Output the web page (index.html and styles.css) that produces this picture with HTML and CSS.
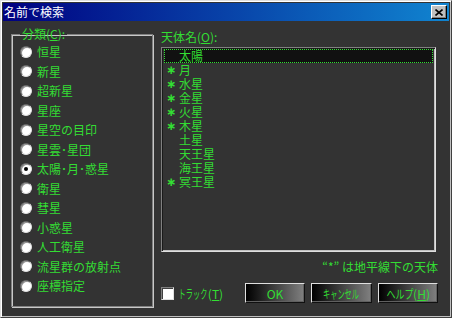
FILE: index.html
```html
<!DOCTYPE html>
<html lang="ja">
<head>
    <meta charset="UTF-8">
    <title>名前で検索</title>
    <link rel="stylesheet" href="styles.css">
</head>
<body>

    <div class="window">
        <div class="titlebar">
            <span class="title">名前で検索</span>
            <button class="close-btn">
                <svg width="8" height="7" viewBox="0 0 8 7">
                    <path d="M0.5 0.5 L7.5 6.5 M7.5 0.5 L0.5 6.5" stroke="#000" stroke-width="1.6" fill="none"/>
                </svg>
            </button>
        </div>

        <div class="main">
            <fieldset class="group">
                <legend>分類(<u>C</u>):</legend>
                <div class="radio-row"><span class="radio"></span>恒星</div>
                <div class="radio-row"><span class="radio"></span>新星</div>
                <div class="radio-row"><span class="radio"></span>超新星</div>
                <div class="radio-row"><span class="radio"></span>星座</div>
                <div class="radio-row"><span class="radio"></span>星空の目印</div>
                <div class="radio-row"><span class="radio"></span>星雲･星団</div>
                <div class="radio-row"><span class="radio checked"></span>太陽･月･惑星</div>
                <div class="radio-row"><span class="radio"></span>衛星</div>
                <div class="radio-row"><span class="radio"></span>彗星</div>
                <div class="radio-row"><span class="radio"></span>小惑星</div>
                <div class="radio-row"><span class="radio"></span>人工衛星</div>
                <div class="radio-row"><span class="radio"></span>流星群の放射点</div>
                <div class="radio-row"><span class="radio"></span>座標指定</div>
            </fieldset>

            <div class="right">
                <div class="list-label">天体名(<u>O</u>):</div>
                <div class="listbox">
                    <div class="item selected"><span class="mark"></span>太陽</div>
                    <div class="item"><span class="mark">∗</span>月</div>
                    <div class="item"><span class="mark">∗</span>水星</div>
                    <div class="item"><span class="mark">∗</span>金星</div>
                    <div class="item"><span class="mark">∗</span>火星</div>
                    <div class="item"><span class="mark">∗</span>木星</div>
                    <div class="item"><span class="mark"></span>土星</div>
                    <div class="item"><span class="mark"></span>天王星</div>
                    <div class="item"><span class="mark"></span>海王星</div>
                    <div class="item"><span class="mark">∗</span>冥王星</div>
                </div>
                <div class="note">“*” は地平線下の天体</div>
                <div class="bottom-row">
                    <label class="check"><span class="checkbox"></span><span class="squeeze sq-track">トラック</span>(<u>T</u>)</label>
                    <div class="buttons">
                        <button class="btn">OK</button>
                        <button class="btn"><span class="squeeze sq-cancel">キャンセル</span></button>
                        <button class="btn"><span class="squeeze sq-help">ヘルプ</span>(<u>H</u>)</button>
                    </div>
                </div>
            </div>
        </div>
    </div>

</body>
</html>
```

FILE: styles.css
```css
body {
    margin: 0;
    background: #333333;
    font-family: "Noto Sans CJK JP", "DejaVu Sans", sans-serif;
    font-size: 12px;
}
.window {
    width: 452px;
    height: 318px;
    box-sizing: border-box;
    background: #333333;
    border-top: 1px solid #dfdfdf;
    border-left: 1px solid #dfdfdf;
    border-right: 1px solid #404040;
    border-bottom: 1px solid #404040;
    box-shadow: inset 1px 1px 0 #ffffff, inset -1px -1px 0 #c0c0c0;
    padding: 2px;
    color: #33dd33;
}
.titlebar {
    height: 18px;
    background: linear-gradient(to right, #000080, #1084d0);
    display: flex;
    align-items: center;
    justify-content: space-between;
    padding: 0 2px 0 1px;
}
.title {
    color: white;
    font-size: 12px;
    line-height: 14px;
}
.close-btn {
    width: 16px;
    height: 14px;
    padding: 0;
    background: #c0c0c0;
    border-top: 1px solid #ffffff;
    border-left: 1px solid #ffffff;
    border-right: 1px solid #000000;
    border-bottom: 1px solid #000000;
    box-shadow: inset -1px -1px 0 #808080;
    display: flex;
    align-items: center;
    justify-content: center;
}
.main {
    display: flex;
    padding-left: 8px;
}
.group {
    margin: 6px 0 0 0;
    padding: 0 0 0 8px;
    width: 142px;
    height: 280px;
    box-sizing: border-box;
    border: 1px solid #808080;
    box-shadow: inset 1px 1px 0 #c8c8c8, 1px 1px 0 #c8c8c8;
}
.group legend {
    padding: 0 2px;
    line-height: 14px;
    color: #33dd33;
}
.radio-row {
    height: 19.5px;
    display: flex;
    align-items: center;
    white-space: nowrap;
}
.radio-row:first-of-type {
    margin-top: 1px;
}
.radio {
    width: 12px;
    height: 12px;
    box-sizing: border-box;
    border-radius: 50%;
    background: white;
    border: 1px solid;
    border-color: #606060 #e0e0e0 #e0e0e0 #606060;
    box-shadow: inset 1px 1px 0 #909090;
    margin-right: 5px;
    position: relative;
    flex-shrink: 0;
}
.radio.checked::after {
    content: "";
    position: absolute;
    left: 3px;
    top: 3px;
    width: 4px;
    height: 4px;
    border-radius: 50%;
    background: black;
}
.right {
    margin-left: 8px;
    padding-top: 9px;
    width: 277px;
}
.list-label {
    line-height: 14px;
}
.listbox {
    margin-top: 3px;
    width: 275px;
    height: 205px;
    box-sizing: border-box;
    border: 1px solid;
    border-color: #808080 #dfdfdf #dfdfdf #808080;
    box-shadow: inset 1px 1px 0 #1a1a1a, inset -1px -1px 0 #c0c0c0;
    padding: 1px 2px;
}
.item {
    height: 14px;
    line-height: 14px;
    display: flex;
    align-items: center;
    padding-left: 2px;
    box-sizing: border-box;
    white-space: nowrap;
}
.item.selected {
    background: #111111;
    border: 1px dotted #33dd33;
    padding-left: 1px;
}
.mark {
    width: 13px;
    flex-shrink: 0;
    font-family: "DejaVu Sans", sans-serif;
    font-size: 12px;
    font-weight: bold;
}
.note {
    margin-top: 8px;
    line-height: 14px;
    text-align: right;
}
.bottom-row {
    margin-top: 9px;
    display: flex;
    justify-content: space-between;
    align-items: center;
}
.check {
    display: flex;
    align-items: center;
    white-space: nowrap;
}
.checkbox {
    width: 13px;
    height: 13px;
    box-sizing: border-box;
    background: white;
    border: 1px solid;
    border-color: #808080 #dfdfdf #dfdfdf #808080;
    box-shadow: inset 1px 1px 0 #404040;
    margin-right: 5px;
}
.squeeze {
    display: inline-block;
    transform: scaleX(0.6);
}
.sq-track {
    margin: 0 -9.6px;
}
.sq-cancel {
    margin: 0 -12px;
}
.sq-help {
    transform: scaleX(0.75);
    margin: 0 -4.5px;
}
.buttons {
    display: flex;
    gap: 6px;
}
.btn {
    width: 60px;
    height: 20px;
    padding: 0;
    white-space: nowrap;
    font-family: "Noto Sans CJK JP", "DejaVu Sans", sans-serif;
    font-size: 12px;
    color: #33dd33;
    background: linear-gradient(to right, #000000, #808080);
    border-top: 1px solid #e0e0e0;
    border-left: 1px solid #e0e0e0;
    border-right: 1px solid #101010;
    border-bottom: 1px solid #101010;
    box-shadow: inset -1px -1px 0 #606060;
}
.btn:nth-child(2) {
    width: 61px;
}
```
